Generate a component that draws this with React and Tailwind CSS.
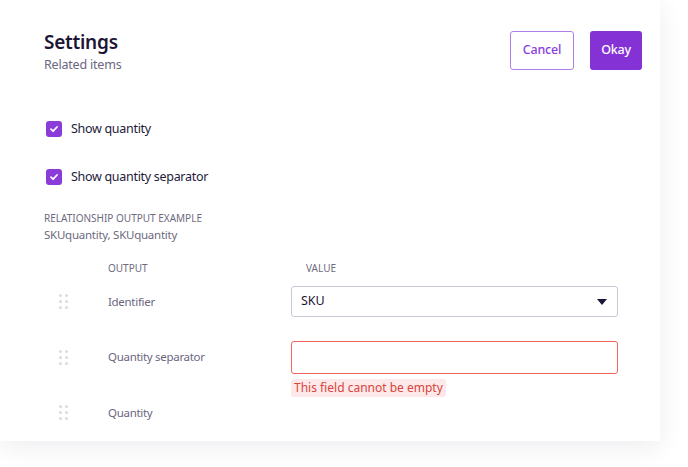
const ROWS = [
  { label: "Identifier", kind: "select", value: "SKU" },
  { label: "Quantity separator", kind: "input", error: "This field cannot be empty" },
  { label: "Quantity", kind: "none" },
];

function Check() {
  return (
    <span className="flex h-4 w-4 items-center justify-center rounded-[3px] bg-[#8a3bd8]">
      <svg width="10" height="10" viewBox="0 0 10 10" fill="none">
        <path d="M2 5.2 4.1 7.2 8 3" stroke="white" strokeWidth="1.8" strokeLinecap="round" strokeLinejoin="round" />
      </svg>
    </span>
  );
}

function Grip() {
  return (
    <div className="grid grid-cols-2 gap-x-[3px] gap-y-[3px]">
      {[0, 1, 2, 3, 4, 5].map((i) => (
        <span key={i} className="h-[3px] w-[3px] rounded-full bg-[#dcdae2]" />
      ))}
    </div>
  );
}

export default function App() {
  return (
    <div className="h-[467px] w-[688px] overflow-hidden bg-white" style={{ fontFamily: '"Noto Sans", "Open Sans", sans-serif' }}>
      <div className="h-[441px] w-[660px] bg-white pl-11 pr-[18px] pt-[28px] shadow-[0_6px_24px_rgba(40,30,70,0.08)]">
        <div className="flex items-start justify-between">
          <div>
            <h1 className="text-[19px] font-semibold leading-7 tracking-[-0.25px] text-[#1d1536]">Settings</h1>
            <p className="text-[12.5px] leading-[18px] tracking-[-0.2px] text-[#6b6680]">Related items</p>
          </div>
          <div className="mt-[3px] flex gap-4">
            <button className="h-[39px] w-[64px] rounded-[3px] border border-[#b07ee8] text-[12.5px] font-medium tracking-[-0.2px] text-[#8a3ee0]">Cancel</button>
            <button className="h-[39px] w-[52px] rounded-[3px] bg-[#8432d6] text-[12.5px] font-medium tracking-[-0.2px] text-white">Okay</button>
          </div>
        </div>

        <div className="mt-[47px] flex flex-col gap-8 pl-0.5">
          {["Show quantity", "Show quantity separator"].map((t) => (
            <label key={t} className="flex h-4 items-center gap-[9px] text-[12.5px] tracking-[-0.3px] text-[#231b3a]">
              <Check />
              {t}
            </label>
          ))}
        </div>

        <div className="mt-[25px] text-[10px] uppercase leading-4 text-[#6e6a80]">Relationship output example</div>
        <div className="mt-px text-[11.5px] leading-4 tracking-[-0.25px] text-[#6e6a80]">SKUquantity, SKUquantity</div>

        <div className="mt-[18px] grid grid-cols-[64px_183px_327px] items-center text-[10px] uppercase text-[#6e6a80]">
          <span />
          <span>Output</span>
          <span className="pl-[15px]">Value</span>
        </div>

        <div className="mt-[10px] flex flex-col">
          {ROWS.map((r) => (
            <div key={r.label} className="grid h-[55.5px] grid-cols-[64px_183px_327px] items-start">
              <div className="flex h-[31px] items-center pl-[15px]">
                <Grip />
              </div>
              <div className="flex h-[31px] items-center text-[11.5px] tracking-[-0.3px] text-[#6b6680]">{r.label}</div>
              <div>
                {r.kind === "select" && (
                  <div className="flex h-[31px] items-center justify-between rounded-[3px] border border-[#cbc8d6] pl-[9px] pr-[10px] text-[12.5px] text-[#1d1536]">
                    {r.value}
                    <svg width="10" height="6" viewBox="0 0 10 6">
                      <path d="M0 0h10L5 6z" fill="#1d1536" />
                    </svg>
                  </div>
                )}
                {r.kind === "input" && (
                  <div className="-mt-px">
                    <div className="h-[33px] rounded-[3px] border-[1.5px] border-solid border-[#f4645c]" />
                    <span className="mt-[5px] inline-block rounded-[3px] bg-[#fde9e9] px-[3px] text-[12px] leading-[18px] text-[#d9443d]">
                      {r.error}
                    </span>
                  </div>
                )}
              </div>
            </div>
          ))}
        </div>
      </div>
    </div>
  );
}
